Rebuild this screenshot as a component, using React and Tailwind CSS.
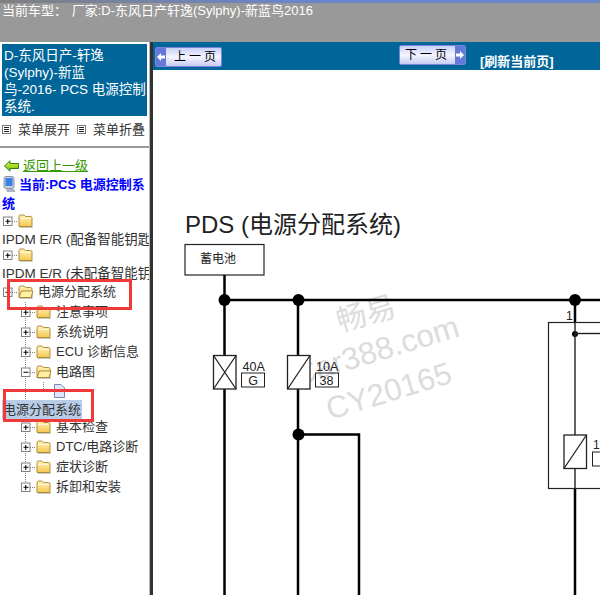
import React from "react";

const CJK = '"Liberation Sans","Noto Sans CJK SC",sans-serif';

function Folder({ x, y, open }) {
  return (
    <g transform={`translate(${x} ${y})`}>
      <path d="M1 12.5 V2.5 Q1 1 2.5 1 H6 L7.5 2.5 H12.5 Q14 2.5 14 4 V12.5 Z" fill="url(#fold)" stroke="#a8842c" strokeWidth="0.9" />
      {open ? <path d="M1 12.5 L3.5 6 H15 L13 12.5 Z" fill="#fff0a8" stroke="#a8842c" strokeWidth="0.9" /> : <path d="M2 4.5 H13" stroke="#fff8d8" strokeWidth="1" />}
      <path d="M2 13.5 H15" stroke="#c8c8c8" strokeWidth="1" />
    </g>
  );
}

function Box({ x, y, minus }) {
  return (
    <g>
      <rect x={x + 0.5} y={y + 0.5} width="8.5" height="8.5" fill="#fff" stroke="#808080" />
      <path d={`M${x + 2.5} ${y + 4.75} H${x + 7.5}`} stroke="#000" strokeWidth="1" />
      {!minus && <path d={`M${x + 4.75} ${y + 2.5} V${y + 7.5}`} stroke="#000" strokeWidth="1" />}
    </g>
  );
}

function Grad() {
  return (
    <svg width="0" height="0" className="absolute">
      <defs>
        <linearGradient id="fold" x1="0" y1="0" x2="0" y2="1">
          <stop offset="0" stopColor="#fff4b8" />
          <stop offset="1" stopColor="#f4c850" />
        </linearGradient>
        <linearGradient id="arrow" x1="0" y1="0" x2="0" y2="1">
          <stop offset="0" stopColor="#f0f040" />
          <stop offset="1" stopColor="#60c010" />
        </linearGradient>
      </defs>
    </svg>
  );
}

function Row({ text, open, minus, last }) {
  return (
    <div className="relative flex h-[20px] items-center text-[13px] leading-[20px] text-[#333] whitespace-nowrap">
      <svg width="56" height="20" className="shrink-0">
        <path d={last ? "M25.5 0 V10" : "M25.5 0 V20"} stroke="#808080" strokeDasharray="1 1" />
        <path d="M30 10.5 H36" stroke="#808080" strokeDasharray="1 1" />
        <Box x={21} y={5.5} minus={minus} />
        <Folder x={36} y={3} open={open} />
      </svg>
      <span>{text}</span>
    </div>
  );
}

function TopRow({ open, minus, text }) {
  return (
    <div className="flex h-[14px] items-center overflow-visible whitespace-nowrap text-[13px] text-[#333]">
      <svg width="34" height="14" className="shrink-0 overflow-visible">
        <path d="M12 7.5 H18" stroke="#808080" strokeDasharray="1 1" />
        <Box x={3} y={2.5} minus={minus} />
        <Folder x={18} y={0} open={open} />
      </svg>
      {text && <span className="ml-[4px]">{text}</span>}
    </div>
  );
}

function IpdmRow({ text }) {
  return <div className="h-[20px] pt-[4px] pl-[2px] text-[13.5px] leading-[16px] text-[#333] whitespace-nowrap">{text}</div>;
}

function MenuIcon() {
  return (
    <svg width="9" height="10" className="shrink-0">
      <rect x="0.5" y="0.5" width="8" height="8" fill="#fff" stroke="#777" />
      <path d="M2 2.5 H7 M2 4.5 H7 M2 6.5 H7" stroke="#222" />
    </svg>
  );
}

function NavBtn({ text, next }) {
  return (
    <div className={`flex h-[20px] w-[67px] items-center rounded-[2px] border border-[#7a84d8] bg-gradient-to-b from-[#c8d0f8] via-[#f4f5ff] to-[#c8ccf4] text-[12px] text-black ${next ? "flex-row" : "flex-row-reverse"}`}>
      <span className={`flex-1 text-center tracking-[3px] ${next ? "" : "pl-[6px]"}`}>{text}</span>
      <span className="flex h-full w-[10px] items-center justify-center bg-[#6478d8]">
        <svg width="8" height="8" viewBox="0 0 8 8">
          <path d={next ? "M0 2.5 H4 V0 L8 4 L4 8 V5.5 H0 Z" : "M8 2.5 H4 V0 L0 4 L4 8 V5.5 H8 Z"} fill="#fff" />
        </svg>
      </span>
    </div>
  );
}

function Diagram() {
  const l = "#000";
  return (
    <svg viewBox="153 70 447 525" width="447" height="525" className="block">
      <g fill="#dcdcdc" fontFamily={CJK}>
        <text transform="translate(340 332) rotate(-16)" fontSize="30">畅易</text>
        <text transform="translate(297 386) rotate(-17)" fontSize="31.5">Car388.com</text>
        <text transform="translate(330 420) rotate(-17)" fontSize="31">CY20165</text>
      </g>
      <text x="185" y="233" fontSize="24" fontFamily={CJK} fill="#222">PDS (电源分配系统)</text>
      <rect x="185" y="244.5" width="79" height="30.5" fill="#fff" stroke="#222" strokeWidth="1.2" />
      <text x="200" y="263" fontSize="12" fontFamily={CJK} fill="#222">蓄电池</text>

      <g stroke={l} strokeWidth="2.5" fill="none">
        <path d="M224.5 275 V355 M224.5 389 V595" />
        <path d="M298 300 V355 M298 389 V595" />
        <path d="M224 300 H600" />
        <path d="M298 434.5 H359 V595" />
        <path d="M575 300 V322 M575 488 V595" />
      </g>
      <g fill={l}>
        <circle cx="224.5" cy="300" r="6" />
        <circle cx="298.5" cy="300" r="6" />
        <circle cx="575" cy="300" r="6" />
        <circle cx="298.5" cy="434.5" r="6" />
        <circle cx="575" cy="334" r="3" />
      </g>

      <g stroke="#222" strokeWidth="1.3" fill="#fff">
        <rect x="213.5" y="355.5" width="22.5" height="33.5" />
        <path d="M213.5 355.5 L236 389 M236 355.5 L213.5 389" fill="none" />
        <rect x="287.5" y="355.5" width="22.5" height="33.5" />
        <path d="M287.5 389 L310 355.5" fill="none" />
      </g>
      <g fontFamily={CJK} fontSize="12.5" fill="#222">
        <text x="242.5" y="371">40A</text>
        <text x="316" y="371">10A</text>
        <text x="566" y="320" fontSize="12">1</text>
        <text x="593" y="449" fontSize="12">1</text>
        <text x="253" y="385" textAnchor="middle">G</text>
        <text x="326.5" y="385" textAnchor="middle">38</text>
      </g>
      <g stroke="#222" strokeWidth="1" fill="none">
        <rect x="241.5" y="373" width="23" height="14" />
        <rect x="315.5" y="373" width="23" height="14" />
        <rect x="592.5" y="452" width="12" height="14" />
      </g>
      <g stroke="#222" fill="none">
        <rect x="548.5" y="322.5" width="60" height="166" strokeWidth="1.2" />
        <path d="M575 322 V435 M575 469 V488" strokeWidth="1.4" />
        <path d="M575 333.5 H600" strokeWidth="1.4" />
      </g>
      <g stroke="#222" strokeWidth="1.3" fill="#fff">
        <rect x="564" y="435" width="22.5" height="33.5" />
        <path d="M564 468.5 L586.5 435" fill="none" />
      </g>
    </svg>
  );
}

export default function App() {
  return (
    <div className="relative flex h-[595px] w-[600px] flex-col overflow-hidden bg-white" style={{ fontFamily: CJK }}>
      <Grad />
      <div className="h-[42px] shrink-0 bg-[#999999] text-[13px] leading-[15px] text-white whitespace-nowrap">
        <div className="h-[3px] bg-gradient-to-r from-[#808080] via-[#6a84cc] to-[#6a84cc]" />
        <div className="pl-[2px]">当前车型：&nbsp;<span className="ml-[1px]">厂家:D-东风日产轩逸(Sylphy)-新蓝鸟2016</span></div>
      </div>

      <div className="flex min-h-0 flex-1">
        <aside className="w-[150px] shrink-0 overflow-hidden border-r border-[#bbb]">
          <div className="mx-[2px] mt-[2px] h-[72px] w-[145px] bg-[#006699] px-[2px] pt-[3px] text-[13.5px] leading-[17px] text-white whitespace-nowrap">
            D-东风日产-轩逸<br />(Sylphy)-新蓝<br />鸟-2016- PCS 电源控制<br />系统.
          </div>
          <div className="flex h-[32px] items-center gap-[7px] border-b-2 border-[#999] pl-[2px] pb-[3px] text-[13px] text-[#333] whitespace-nowrap">
            <MenuIcon />
            <span>菜单展开</span>
            <MenuIcon />
            <span>菜单折叠</span>
          </div>

          <div className="pt-[9px]">
            <div className="flex h-[18px] items-center pl-[4px] text-[13px] text-[#339900] whitespace-nowrap">
              <svg width="15" height="12" viewBox="0 0 15 12" className="mr-[4px] shrink-0">
                <path d="M0.5 6 L6 0.8 V3.5 H14.5 V8.5 H6 V11.2 Z" fill="url(#arrow)" stroke="#2f8010" strokeWidth="1" />
              </svg>
              <span className="underline">返回上一级</span>
            </div>
            <div className="relative h-[39px] pl-[2px] text-[13px] font-bold leading-[19px] text-[#0000ff]">
              <svg width="14" height="17" viewBox="0 0 14 17" className="absolute left-[3px] top-[1px]">
                <rect x="1" y="0.5" width="10" height="12" rx="2" fill="#c8d0dc" stroke="#8a94a8" />
                <rect x="2.5" y="2" width="7" height="8" fill="#3a80e8" />
                <path d="M3 12.5 L11 13 L12.5 16 H4 Z" fill="#aab4c4" />
              </svg>
              <span className="pl-[17px]">当前:PCS 电源控制系</span>
              <br />统
            </div>
            <TopRow />
            <IpdmRow text="IPDM E/R (配备智能钥匙)" />
            <TopRow />
            <IpdmRow text="IPDM E/R (未配备智能钥匙)" />
            <div className="flex h-[20px] items-center whitespace-nowrap text-[13px] text-[#333]">
              <TopRow open minus text="电源分配系统" />
            </div>

            <Row text="注意事项" />
            <Row text="系统说明" />
            <Row text="ECU 诊断信息" />
            <Row text="电路图" open minus />
            <div className="h-[18px]">
              <svg width="70" height="18">
                <path d="M25.5 0 V18" stroke="#808080" strokeDasharray="1 1" />
                <path d="M43.5 0 V9 H53" stroke="#808080" strokeDasharray="1 1" fill="none" />
                <path d="M54.5 2.5 H61 L64.5 6 V15.5 H54.5 Z" fill="#dfe6f8" stroke="#7488b8" />
              </svg>
            </div>
            <div className="ml-[2px] h-[19px] w-[80px] bg-[#b8cce8] pl-[1px] text-[13px] leading-[19px] text-[#333] whitespace-nowrap">电源分配系统</div>
            <div className="-mt-[2px]">
              <Row text="基本检查" />
              <Row text="DTC/电路诊断" />
              <Row text="症状诊断" />
              <Row text="拆卸和安装" last />
            </div>
          </div>
        </aside>

        <div className="w-[3px] shrink-0 bg-[#333]" />

        <main className="min-w-0 flex-1 overflow-hidden">
          <div className="flex h-[28px] items-start bg-[#006699]">
            <div className="ml-[2px] mt-[5px]"><NavBtn text="上一页" /></div>
            <div className="ml-[177px] mt-[3px]"><NavBtn text="下一页" next /></div>
            <span className="ml-[14px] mt-[12px] text-[13px] font-bold leading-[16px] text-white whitespace-nowrap">[刷新当前页]</span>
          </div>
          <Diagram />
        </main>
      </div>

      <div className="absolute left-[7px] top-[279px] h-[31px] w-[125px] border-[3px] border-[#f03a3a]" />
      <div className="absolute left-[3px] top-[389px] h-[33px] w-[91px] border-[3px] border-[#f03a3a]" />
    </div>
  );
}
